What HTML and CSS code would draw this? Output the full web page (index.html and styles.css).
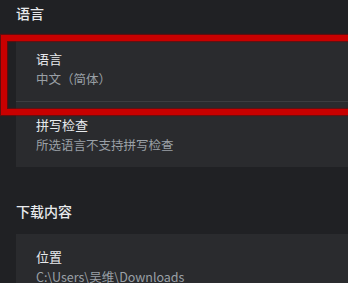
FILE: index.html
```html
<!DOCTYPE html>
<html lang="zh-CN">
<head>
<meta charset="utf-8">
<link rel="stylesheet" href="styles.css">
</head>
<body>
<div class="page">
  <section class="section">
    <h2 class="heading">语言</h2>
    <div class="card">
      <div class="row">
        <div class="label">语言</div>
        <div class="sub">中文（简体）</div>
      </div>
      <div class="row sep">
        <div class="label">拼写检查</div>
        <div class="sub">所选语言不支持拼写检查</div>
      </div>
    </div>
  </section>
  <section class="section second">
    <h2 class="heading">下载内容</h2>
    <div class="card">
      <div class="row">
        <div class="label">位置</div>
        <div class="sub">C:\Users\吴维\Downloads</div>
      </div>
    </div>
  </section>
  <div class="highlight"></div>
</div>
</body>
</html>
```
FILE: styles.css
```css
html, body {
  margin: 0;
  padding: 0;
  background: #202124;
  overflow: hidden;
}
body {
  width: 348px;
  height: 283px;
  font-family: "Noto Sans CJK SC", "Noto Sans", "Liberation Sans", sans-serif;
}
.page {
  position: relative;
  width: 348px;
  height: 283px;
  overflow: hidden;
}
.section {
  margin: 0;
}
.second {
  margin-top: 31px;
}
.heading {
  margin: 0 0 10px 0;
  padding-left: 16px;
  height: 26px;
  line-height: 26px;
  font-size: 14px;
  font-weight: 500;
  color: #e8eaed;
}
.card {
  margin-left: 16px;
  width: 360px;
  background: #2a2b2e;
}
.row {
  height: 65px;
  padding-left: 20px;
  display: flex;
  flex-direction: column;
  justify-content: center;
  box-sizing: border-box;
}
.sep {
  border-top: 1px solid #3c3d40;
  height: 66px;
}
.label {
  font-size: 13px;
  line-height: 20px;
  color: #e8eaed;
}
.sub {
  font-size: 12.5px;
  line-height: 20px;
  color: #9aa0a6;
}
.highlight {
  position: absolute;
  left: 1px;
  top: 35px;
  width: 380px;
  height: 80px;
  box-sizing: border-box;
  border: 6px solid #c80000;
  box-shadow: 0 0 1px 1px rgba(140, 0, 0, 0.6), inset 0 0 1px 1px rgba(140, 0, 0, 0.6);
}
```
